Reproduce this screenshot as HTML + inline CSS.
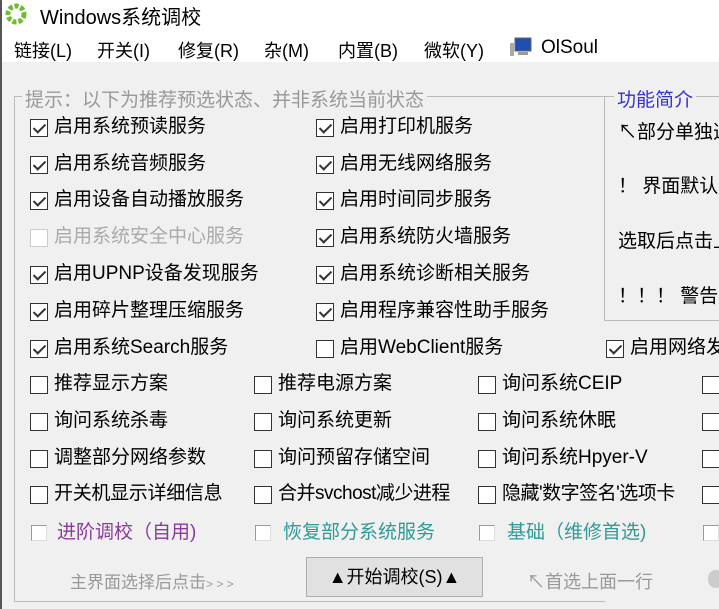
<!DOCTYPE html>
<html><head><meta charset="utf-8"><style>
body{margin:0;width:719px;height:609px;overflow:hidden;background:#f0f0f0;font-family:"Liberation Sans","Noto Sans CJK SC",sans-serif;position:relative;color:#000}
.a{position:absolute;white-space:nowrap}
.cb{position:absolute;width:18px;height:18px;border:1px solid #333;background:#fff;box-sizing:border-box}
.cb.c::after{content:"";position:absolute;left:5px;top:1px;width:5px;height:10px;border:solid #333;border-width:0 2px 2px 0;transform:rotate(45deg)}
.cb.d{border-color:#ccc}
.cb.s{width:16px;height:16px;border-color:#999 #ddd #ddd #999}
.l{position:absolute;font-size:19px;white-space:nowrap;line-height:20px}
</style></head><body>
<div class="a" style="left:0;top:0;width:719px;height:62px;background:#fff"></div>
<div class="a" style="left:0;top:0;width:2px;height:609px;background:#555"></div>
<svg class="a" style="left:5px;top:3px" width="22" height="22" viewBox="0 0 22 22"><circle cx="11" cy="11" r="8" fill="none" stroke="#6cbf2a" stroke-width="5" stroke-dasharray="4 2"/><circle cx="11" cy="11" r="4" fill="#fff"/></svg>
<div class="a" style="left:40px;top:1px;font-size:20px">Windows系统调校</div>
<div class="a" style="left:14px;top:37px;font-size:18px">链接(L)</div>
<div class="a" style="left:97px;top:37px;font-size:18px">开关(I)</div>
<div class="a" style="left:178px;top:37px;font-size:18px">修复(R)</div>
<div class="a" style="left:264px;top:37px;font-size:18px">杂(M)</div>
<div class="a" style="left:338px;top:37px;font-size:18px">内置(B)</div>
<div class="a" style="left:424px;top:37px;font-size:18px">微软(Y)</div>
<svg class="a" style="left:509px;top:37px" width="24" height="20"><rect x="6" y="1" width="16" height="13" fill="#1f4fb0" stroke="#666"/><rect x="1" y="6" width="4" height="13" fill="#aaa"/><rect x="9" y="15" width="10" height="3" fill="#999"/></svg>
<div class="a" style="left:541px;top:37px;font-size:19px">OlSoul</div>
<div class="a" style="left:14px;top:96px;width:590px;height:504px;border:1px solid #bbb;border-right:none"></div>
<div class="a" style="left:22px;top:85px;font-size:19px;color:#999;background:#f0f0f0;padding:0 3px">提示：以下为推荐预选状态、并非系统当前状态</div>
<div class="a" style="left:604px;top:96px;width:120px;height:223px;border:1px solid #bbb"></div>
<div class="a" style="left:614px;top:85px;font-size:19px;color:#3333cc;background:#f0f0f0;padding:0 3px">功能简介</div>
<div class="a" style="left:618px;top:117px;font-size:19px">↖部分单独选</div>
<div class="a" style="left:618px;top:171px;font-size:19px">！ 界面默认勾</div>
<div class="a" style="left:618px;top:226px;font-size:19px">选取后点击上</div>
<div class="a" style="left:618px;top:281px;font-size:19px">！！！ 警告：</div>

<div class="cb c" style="left:30px;top:119px"></div><div class="l" style="left:54px;top:117px">启用系统预读服务</div>
<div class="cb c" style="left:316px;top:119px"></div><div class="l" style="left:340px;top:117px">启用打印机服务</div>
<div class="cb c" style="left:30px;top:156px"></div><div class="l" style="left:54px;top:154px">启用系统音频服务</div>
<div class="cb c" style="left:316px;top:156px"></div><div class="l" style="left:340px;top:154px">启用无线网络服务</div>
<div class="cb c" style="left:30px;top:192px"></div><div class="l" style="left:54px;top:190px">启用设备自动播放服务</div>
<div class="cb c" style="left:316px;top:192px"></div><div class="l" style="left:340px;top:190px">启用时间同步服务</div>
<div class="cb d" style="left:30px;top:229px"></div><div class="l" style="left:54px;top:227px;color:#aaa">启用系统安全中心服务</div>
<div class="cb c" style="left:316px;top:229px"></div><div class="l" style="left:340px;top:227px">启用系统防火墙服务</div>
<div class="cb c" style="left:30px;top:266px"></div><div class="l" style="left:54px;top:264px">启用UPNP设备发现服务</div>
<div class="cb c" style="left:316px;top:266px"></div><div class="l" style="left:340px;top:264px">启用系统诊断相关服务</div>
<div class="cb c" style="left:30px;top:303px"></div><div class="l" style="left:54px;top:301px">启用碎片整理压缩服务</div>
<div class="cb c" style="left:316px;top:303px"></div><div class="l" style="left:340px;top:301px">启用程序兼容性助手服务</div>
<div class="cb c" style="left:30px;top:340px"></div><div class="l" style="left:54px;top:338px">启用系统Search服务</div>
<div class="cb" style="left:316px;top:340px"></div><div class="l" style="left:340px;top:338px">启用WebClient服务</div>
<div class="cb c" style="left:606px;top:340px"></div><div class="l" style="left:630px;top:338px">启用网络发现</div>

<div class="cb" style="left:30px;top:376px"></div><div class="l" style="left:54px;top:374px">推荐显示方案</div>
<div class="cb" style="left:254px;top:376px"></div><div class="l" style="left:278px;top:374px">推荐电源方案</div>
<div class="cb" style="left:478px;top:376px"></div><div class="l" style="left:502px;top:374px">询问系统CEIP</div>
<div class="cb" style="left:702px;top:376px"></div>
<div class="cb" style="left:30px;top:413px"></div><div class="l" style="left:54px;top:411px">询问系统杀毒</div>
<div class="cb" style="left:254px;top:413px"></div><div class="l" style="left:278px;top:411px">询问系统更新</div>
<div class="cb" style="left:478px;top:413px"></div><div class="l" style="left:502px;top:411px">询问系统休眠</div>
<div class="cb" style="left:702px;top:413px"></div>
<div class="cb" style="left:30px;top:450px"></div><div class="l" style="left:54px;top:448px">调整部分网络参数</div>
<div class="cb" style="left:254px;top:450px"></div><div class="l" style="left:278px;top:448px">询问预留存储空间</div>
<div class="cb" style="left:478px;top:450px"></div><div class="l" style="left:502px;top:448px">询问系统Hpyer-V</div>
<div class="cb" style="left:702px;top:450px"></div>
<div class="cb" style="left:30px;top:486px"></div><div class="l" style="left:54px;top:484px;letter-spacing:-0.3px">开关机显示详细信息</div>
<div class="cb" style="left:254px;top:486px"></div><div class="l" style="left:278px;top:484px;letter-spacing:-0.5px">合并svchost减少进程</div>
<div class="cb" style="left:478px;top:486px"></div><div class="l" style="left:502px;top:484px;letter-spacing:-0.5px">隐藏'数字签名'选项卡</div>
<div class="cb" style="left:702px;top:486px"></div>

<div class="cb s" style="left:31px;top:525px"></div><div class="l" style="left:57px;top:523px;color:#8a3a9a">进阶调校（自用)</div>
<div class="cb s" style="left:255px;top:525px"></div><div class="l" style="left:283px;top:523px;color:#2f9a96">恢复部分系统服务</div>
<div class="cb s" style="left:479px;top:525px"></div><div class="l" style="left:507px;top:523px;color:#2f9a96">基础（维修首选)</div>
<div class="cb s" style="left:703px;top:525px"></div>

<div class="a" style="left:70px;top:568px;font-size:17px;color:#999">主界面选择后点击<span style="font-size:12px">&gt; &gt; &gt;</span></div>
<div class="a" style="left:306px;top:557px;width:177px;height:40px;border:1px solid #adadad;background:#e1e1e1;box-sizing:border-box;text-align:center;line-height:38px;font-size:18px">▲开始调校(S)▲</div>
<div class="a" style="left:527px;top:568px;font-size:18px;color:#999">↖首选上面一行</div>
<div class="a" style="left:708px;top:570px;width:16px;height:18px;border-radius:8px;background:#ccc"></div>
</body></html>
